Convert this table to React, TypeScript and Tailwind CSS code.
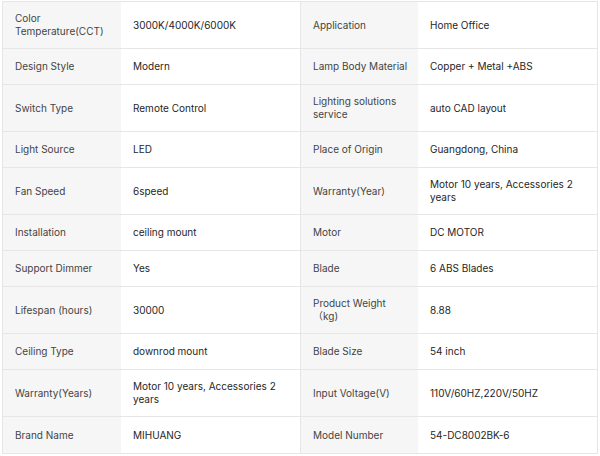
import React from "react";

interface Spec {
  label: string;
  value: string;
}

// each row holds two label/value pairs; tall rows have a wrapped cell
const rows: { tall: boolean; left: Spec; right: Spec }[] = [
  {
    tall: true,
    left: { label: "Color\nTemperature(CCT)", value: "3000K/4000K/6000K" },
    right: { label: "Application", value: "Home Office" },
  },
  {
    tall: false,
    left: { label: "Design Style", value: "Modern" },
    right: { label: "Lamp Body Material", value: "Copper + Metal +ABS" },
  },
  {
    tall: true,
    left: { label: "Switch Type", value: "Remote Control" },
    right: { label: "Lighting solutions\nservice", value: "auto CAD layout" },
  },
  {
    tall: false,
    left: { label: "Light Source", value: "LED" },
    right: { label: "Place of Origin", value: "Guangdong, China" },
  },
  {
    tall: true,
    left: { label: "Fan Speed", value: "6speed" },
    right: { label: "Warranty(Year)", value: "Motor 10 years, Accessories 2\nyears" },
  },
  {
    tall: false,
    left: { label: "Installation", value: "ceiling mount" },
    right: { label: "Motor", value: "DC MOTOR" },
  },
  {
    tall: false,
    left: { label: "Support Dimmer", value: "Yes" },
    right: { label: "Blade", value: "6 ABS Blades" },
  },
  {
    tall: true,
    left: { label: "Lifespan (hours)", value: "30000" },
    right: { label: "Product Weight\n（kg)", value: "8.88" },
  },
  {
    tall: false,
    left: { label: "Ceiling Type", value: "downrod mount" },
    right: { label: "Blade Size", value: "54 inch" },
  },
  {
    tall: true,
    left: { label: "Warranty(Years)", value: "Motor 10 years, Accessories 2\nyears" },
    right: { label: "Input Voltage(V)", value: "110V/60HZ,220V/50HZ" },
  },
  {
    tall: false,
    left: { label: "Brand Name", value: "MIHUANG" },
    right: { label: "Model Number", value: "54-DC8002BK-6" },
  },
];

const Label: React.FC<{ text: string; divider?: boolean }> = ({ text, divider }) => (
  <div
    className={`flex items-center bg-[#f6f6f6] px-3 whitespace-pre text-[#444] ${
      divider ? "border-l border-[#e6e6e6]" : ""
    }`}
  >
    {text}
  </div>
);

const Value: React.FC<{ text: string }> = ({ text }) => (
  <div className="flex items-center bg-white px-3 whitespace-pre text-[#262626]">{text}</div>
);

export default function App() {
  return (
    <div className="h-[456px] w-[600px] bg-white pl-[2px] pt-[1px] font-['Inter','Noto_Sans_CJK_SC',sans-serif] text-[10px] leading-[13px]">
      <div className="w-[596px] border border-[#e6e6e6]">
        {rows.map((row, i) => (
          <div
            key={i}
            className={`grid grid-cols-[118px_179px_118px_179px] ${
              row.tall ? "h-[47px]" : "h-[36px]"
            } ${i < rows.length - 1 ? "border-b border-[#e6e6e6]" : ""}`}
          >
            <Label text={row.left.label} />
            <Value text={row.left.value} />
            <Label text={row.right.label} divider />
            <Value text={row.right.value} />
          </div>
        ))}
      </div>
    </div>
  );
}
